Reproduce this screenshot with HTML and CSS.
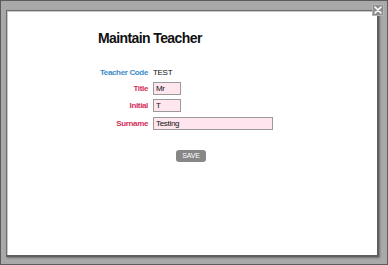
FILE: index.html
```html
<!DOCTYPE html>
<html lang="en">
<head>
    <meta charset="UTF-8">
    <title>Maintain Teacher</title>
    <link rel="stylesheet" href="styles.css">
</head>
<body>

    <div class="frame">
        <!-- Dialog panel -->
        <div class="panel">
            <h2>Maintain Teacher</h2>

            <form class="teacher-form" onsubmit="return false">
                <span class="label info">Teacher Code</span>
                <span class="value">TEST</span>

                <label class="label" for="title">Title</label>
                <input type="text" id="title" class="short" value="Mr">

                <label class="label" for="initial">Initial</label>
                <input type="text" id="initial" class="short" value="T">

                <label class="label" for="surname">Surname</label>
                <input type="text" id="surname" class="long" value="Testing">
            </form>

            <button class="save" type="button">SAVE</button>
        </div>

        <!-- Close button -->
        <div class="close">
            <svg width="8" height="8" viewBox="0 0 8 8">
                <path d="M1 1 L7 7 M7 1 L1 7" stroke="#fff" stroke-width="1.6" stroke-linecap="round"/>
            </svg>
        </div>
    </div>

</body>
</html>
```

FILE: styles.css
```css
/* General Styles */
body {
    margin: 0;
    padding: 0;
    font-family: "Liberation Sans", Arial, sans-serif;
    background: #a8a8a8;
}

.frame {
    position: relative;
    box-sizing: border-box;
    width: 388px;
    height: 265px;
    padding: 9px 8px 7px 5px;
    border: 1px solid #5c5c5c;
    background: #a9a9a9;
    display: flex;
}

.panel {
    flex: 1;
    box-sizing: border-box;
    background: #fff;
    border-top: 1px solid #6e6e6e;
    border-left: 1px solid #6e6e6e;
    border-right: 2px solid #5e5e5e;
    border-bottom: 2px solid #5e5e5e;
    box-shadow: 1px 1px 2px rgba(0, 0, 0, 0.35), inset 1px 1px 0 #c8c8c8;
    padding: 19px 0 0 91px;
}

h2 {
    margin: 0;
    font-size: 14px;
    line-height: 16px;
    letter-spacing: -0.6px;
    color: #111;
}

/* Form */
.teacher-form {
    display: grid;
    grid-template-columns: 50px auto;
    grid-template-rows: 10px 13px 13px 13px;
    column-gap: 5px;
    row-gap: 4.5px;
    align-items: center;
    justify-items: start;
    margin-top: 21px;
}

.label {
    justify-self: end;
    font-size: 8px;
    font-weight: bold;
    letter-spacing: -0.35px;
    color: #d3305a;
}

.label.info {
    color: #3d8bc9;
}

.value {
    font-size: 8px;
    letter-spacing: -0.3px;
    color: #111;
}

input[type="text"] {
    box-sizing: border-box;
    height: 13px;
    margin: 0;
    padding: 0 2px;
    border: 1px solid #9a9a9a;
    background: #ffe5ed;
    font-family: "Liberation Sans", Arial, sans-serif;
    font-size: 8px;
    letter-spacing: -0.3px;
    color: #111;
    outline: none;
}

input.short {
    width: 28px;
}

input.long {
    width: 120px;
}

.save {
    display: block;
    margin: 20px 0 0 78px;
    width: 30px;
    height: 12px;
    padding: 0;
    border: none;
    border-radius: 3px;
    background: #878787;
    color: #fff;
    font-family: "Liberation Sans", Arial, sans-serif;
    font-size: 7px;
    letter-spacing: -0.2px;
    line-height: 12px;
    cursor: pointer;
}

/* Close */
.close {
    position: absolute;
    top: 3px;
    left: 371px;
    width: 12px;
    height: 12px;
    box-sizing: border-box;
    background: #8e8e8e;
    border: 1px solid #b4b4b4;
    display: flex;
    align-items: center;
    justify-content: center;
}
```
